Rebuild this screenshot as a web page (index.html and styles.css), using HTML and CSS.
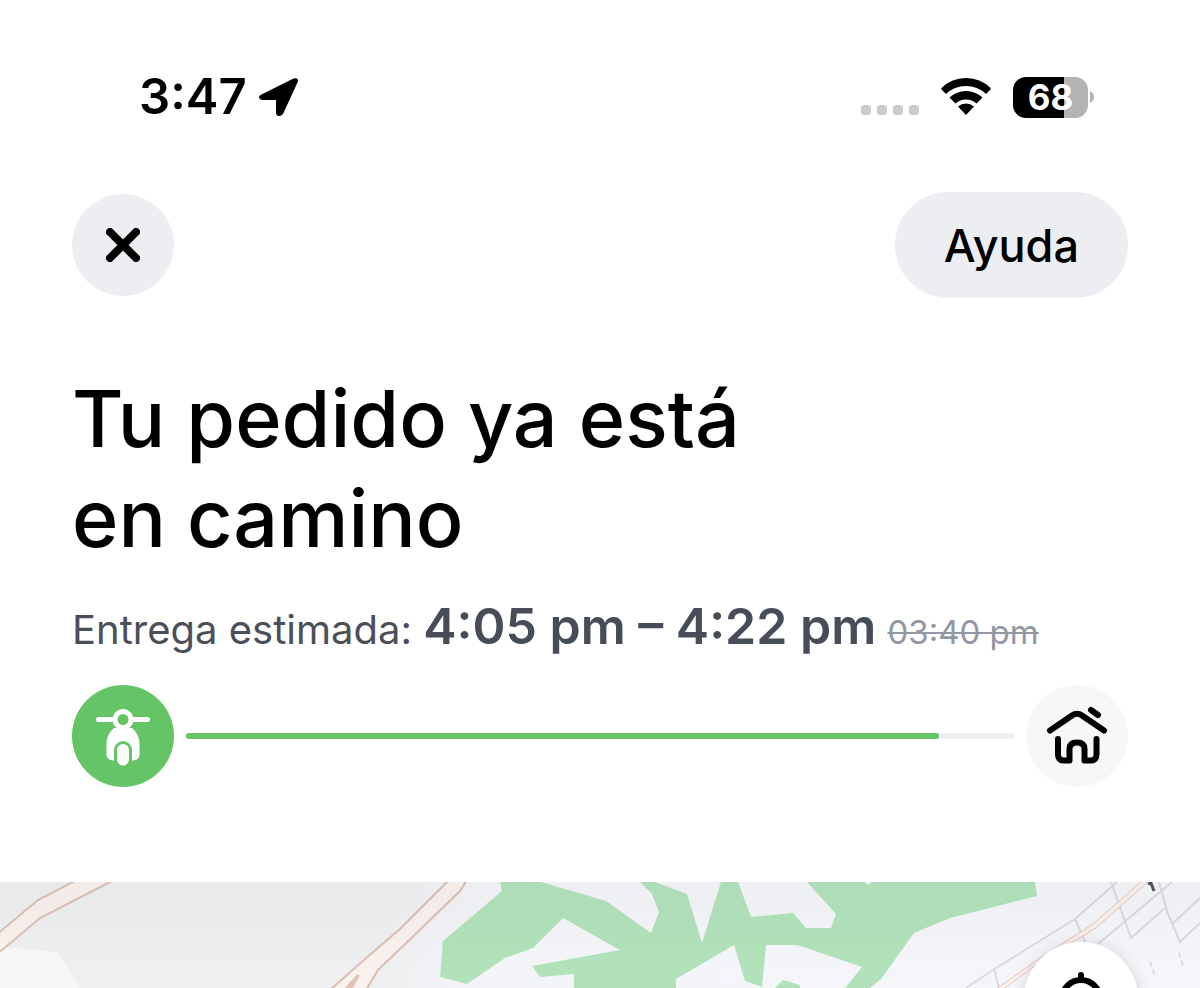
FILE: index.html
```html
<!DOCTYPE html>
<html lang="es">

<head>
    <meta charset="UTF-8">
    <meta name="viewport" content="width=device-width, initial-scale=1.0">
    <title>Tu pedido</title>
    <link rel="stylesheet" href="styles.css">
</head>

<body>
    <div class="wrapper">
        <div class="status-bar">
            <div class="status-left">
                <span class="clock">3:47</span>
                <svg class="location" viewBox="0 0 40 40" width="40" height="40" aria-hidden="true">
                    <path d="M2.500 17.500 34.500 1.500Q40.500 0 38.500 5.500L24 37Q22 39.500 19.500 39Q17 38.500 17 35.500V23H4Q0 22.500 0 20Q0 18.500 2.500 17.500Z" />
                </svg>
            </div>
            <div class="status-right">
                <div class="signal"><i></i><i></i><i></i><i></i></div>
                <svg class="wifi" viewBox="0 0 50 38" width="50" height="38" aria-hidden="true">
                    <path d="M.5 10A35 35 0 0 1 49.500 10Q50 11 49 12L45 16A29 29 0 0 0 5 16L1 12Q0 11 .5 10Z" />
                    <path d="M8.500 19.500A24 24 0 0 1 41.500 19.500L35.500 25.500A16 16 0 0 0 14.500 25.500Z" />
                    <path d="M17 28.500A12 12 0 0 1 33 28.500L25 37Z" />
                </svg>
                <div class="battery">
                    <span class="battery-level">68</span>
                    <svg viewBox="0 0 5 12" width="5" height="12" aria-hidden="true">
                        <path d="M0 0Q4 2 4 6T0 12Z" />
                    </svg>
                </div>
            </div>
        </div>

        <header>
            <button type="button" class="close" aria-label="Cerrar">
                <svg viewBox="0 0 34 34" width="34" height="34" aria-hidden="true">
                    <path d="M4 4 30 30M30 4 4 30" />
                </svg>
            </button>
            <button type="button" class="help">Ayuda</button>
        </header>

        <main>
            <h1>Tu pedido ya está<br>en camino</h1>
            <p class="estimate">Entrega estimada: <strong>4:05 pm – 4:22 pm</strong> <del>03:40 pm</del></p>

            <div class="steps">
                <div class="step step-active">
                    <svg viewBox="0 0 102 102" width="102" height="102" aria-hidden="true">
                        <path class="bar" d="M26.500 34.500H75.500" />
                        <path class="shape" d="M42 43Q34.500 49 34.500 59V70Q35 75 41 75.500H61Q67 75 67.500 70V59Q67.500 49 60 43Z" />
                        <circle class="head" cx="51" cy="34.500" r="8" />
                        <path class="wheel" d="M43.500 74V65A7.500 7.500 0 0 1 58.500 65V74A7.500 8 0 0 1 43.500 74Z" />
                    </svg>
                </div>
                <div class="track" role="progressbar" aria-label="Progreso del pedido" aria-valuenow="91" aria-valuemin="0" aria-valuemax="100">
                    <div class="track-fill" style="width: 91%"></div>
                </div>
                <div class="step">
                    <svg viewBox="0 0 102 102" width="102" height="102" aria-hidden="true">
                        <path class="line" d="M24 45.500 46 30.500Q51 27 56 30.500L78 45.500M65 25 72 30" />
                        <path class="line" d="M32 54V69.500Q32 75.500 38 75.500H43.500V64Q43.500 57.500 51 57.500T58.500 64V75.500H64.500Q70.500 75.500 70.500 69.500V54" />
                    </svg>
                </div>
            </div>
        </main>

        <section class="map">
            <svg class="map-tiles" viewBox="0 0 1200 106" preserveAspectRatio="xMinYMin slice" aria-hidden="true">
                <defs>
                    <linearGradient id="ground" x1="0" y1="0" x2="1" y2="0">
                        <stop offset="0" stop-color="#eeeff1" />
                        <stop offset=".32" stop-color="#eeeff1" />
                        <stop offset=".4" stop-color="#f4f5f8" />
                        <stop offset="1" stop-color="#f5f6f9" />
                    </linearGradient>
                    <linearGradient id="shade" x1="0" y1="0" x2="0" y2="1">
                        <stop offset="0" stop-color="#606868" stop-opacity=".04" />
                        <stop offset=".2" stop-color="#606868" stop-opacity=".04" />
                        <stop offset=".8" stop-color="#606868" stop-opacity="0" />
                    </linearGradient>
                </defs>
                <rect width="1200" height="106" fill="url(#ground)" />
                <path class="block" d="M0 66 14 66 57 70 80 106H0Z" />
                <!-- parks -->
                <path class="park" d="M500 0H541L606 19 651 51 659 30 652 12 640 0H655L687 12 702 61 721 0H738L751 35 793 31 806 46H831L836 32 807 0H1035L1037 14 950 36 914 51 881 97 870 106H845L862 85 800 64 796 63H766L762 105 745 99 734 63 676 97V106H574V92L540 95 532 84 620 68 563 36 533 66 505 76 467 102 440 95 443 59 502 9Z" />
                <path class="park" d="M775 106 783 98 800 103V106Z" />
                <path class="block" d="M865 0H872L868 3Z" />
                <!-- streets -->
                <path class="street" d="M966 106 996 86 1075 37 1117 0M994 86 999 106M1075 37 1085 60M1111 0 1131 56 1165 26M1098 62 1172 0M1159 0 1168 32 1180 60 1200 41M1172 42 1200 16" />
                <path class="street dashed" d="M1150 80 1155 94M1179 71 1183 84" />
                <path class="road" d="M-5 54 38 18 75-1H112L40 36-5 74Z" />
                <path class="road" d="M330 108 365 77 400 47 449-2H467L460 9 400 67 378 88 366 108Z" />
                <path class="road-edge" d="M345 108 358 94M350 108 358 94 350 102" />
                <path class="road small" d="M995 108 1040 76 1093 42 1143-2H1150L1096 46 1040 80 1002 108Z" />
                <path class="label" d="M1148 2 1151 1 1154 9" />
                <rect width="1200" height="106" fill="url(#shade)" />
            </svg>
            <button type="button" class="locate" aria-label="Centrar mapa">
                <svg viewBox="0 0 56 56" width="56" height="56" aria-hidden="true">
                    <circle cx="28" cy="28" r="19" />
                    <path d="M28 4V9M28 47V52M4 28H9M47 28H52" />
                </svg>
            </button>
        </section>
    </div>
</body>

</html>
```
FILE: styles.css
```css
* {
    box-sizing: border-box;
}

body {
    margin: 0;
    background-color: #fff;
    color: #000;
    font-family: Inter, "Liberation Sans", sans-serif;
}

h1,
p {
    margin: 0;
}

button {
    border: 0;
    padding: 0;
    color: inherit;
    font-family: inherit;
    cursor: pointer;
}

svg {
    display: block;
}

.wrapper {
    display: flex;
    flex-direction: column;
    min-height: 100vh;
}

/* status bar */
.status-bar {
    display: flex;
    justify-content: space-between;
    align-items: center;
    padding: 67px 105px 65px 139px;
}

.status-left,
.status-right,
.battery {
    display: flex;
    align-items: center;
}

.status-left {
    gap: 12px;
}

.clock {
    font-size: 49px;
    font-weight: 600;
    line-height: 60px;
}

.status-right {
    gap: 22px;
}

.signal {
    display: flex;
    gap: 6px;
    padding-top: 26px;
}

.signal i {
    width: 10px;
    height: 10px;
    border-radius: 3px;
    background-color: #ccc;
}

.battery {
    gap: 2px;
}

.battery svg {
    fill: #b3b3b3;
}

.battery-level {
    width: 75px;
    height: 41px;
    border-radius: 13px;
    background: linear-gradient(to right, #000 68%, #b3b3b3 68%);
    color: #fff;
    font-size: 35px;
    font-weight: 700;
    line-height: 41px;
    text-align: center;
}

/* header */
header {
    display: flex;
    justify-content: space-between;
    align-items: center;
    padding: 0 72px;
}

.close {
    display: grid;
    place-items: center;
    width: 102px;
    height: 102px;
    border-radius: 50%;
    background-color: #edeef2;
}

.close svg {
    fill: none;
    stroke: #000;
    stroke-width: 8;
    stroke-linecap: round;
}

.help {
    height: 106px;
    padding: 0 49px;
    border-radius: 53px;
    background-color: #edeef2;
    font-size: 45px;
    font-weight: 500;
}

/* order */
main {
    padding: 70px 72px 95px;
}

h1 {
    font-size: 79px;
    font-weight: 500;
    line-height: 100px;
}

.estimate {
    height: 60px;
    margin-top: 28px;
    color: #4b4f59;
    font-size: 40px;
    font-weight: 400;
    line-height: 60px;
    white-space: nowrap;
}

.estimate strong {
    color: #474d58;
    font-size: 50px;
    font-weight: 600;
}

.estimate del {
    color: #9197a3;
    font-size: 33px;
    text-decoration-thickness: 2px;
}

.steps {
    display: flex;
    align-items: center;
    gap: 12px;
    margin-top: 29px;
}

.step {
    width: 102px;
    height: 102px;
    border-radius: 50%;
    background-color: #f6f7f9;
}

.step-active {
    background-color: #65c466;
}

.step .line {
    fill: none;
    stroke: #000;
    stroke-width: 6;
    stroke-linecap: round;
    stroke-linejoin: round;
}

.step .bar {
    stroke: #fff;
    stroke-width: 5;
    stroke-linecap: round;
}

.step .shape {
    fill: #fff;
}

.step .head {
    fill: #65c466;
    stroke: #fff;
    stroke-width: 5;
}

.step .wheel {
    fill: #fff;
    stroke: #65c466;
    stroke-width: 3;
}

.track {
    flex: 1;
    height: 6px;
    border-radius: 3px;
    background-color: #edeef0;
}

.track-fill {
    height: 100%;
    border-radius: 3px;
    background-color: #65c466;
}

/* map */
.map {
    position: relative;
    flex: 1;
    min-height: 105px;
    overflow: hidden;
}

.map-tiles {
    position: absolute;
    width: 100%;
    height: 100%;
}

.block {
    fill: #f5f7f9;
}

.park {
    fill: #b1e2ba;
}

.street,
.road-edge,
.label {
    fill: none;
    stroke-linejoin: round;
}

.street {
    stroke: #d9dade;
    stroke-width: 2;
}

.street.dashed {
    stroke-dasharray: 5 3;
}

.road {
    fill: #f9f1ed;
    stroke: #dcbfb0;
    stroke-width: 2;
}

.road.small {
    stroke: #e6c3b8;
    stroke-width: 1;
}

.road-edge {
    stroke: #dfc2b3;
    stroke-width: 3;
}

.label {
    stroke: #50515d;
    stroke-width: 3;
}

.locate {
    position: absolute;
    top: 60px;
    right: 62px;
    display: grid;
    place-items: center;
    width: 114px;
    height: 114px;
    border-radius: 50%;
    background-color: #fff;
    box-shadow: 0 2px 16px rgba(0, 0, 0, .15);
}

.locate svg {
    fill: none;
    stroke: #000;
    stroke-width: 6;
    stroke-linecap: round;
}
```
